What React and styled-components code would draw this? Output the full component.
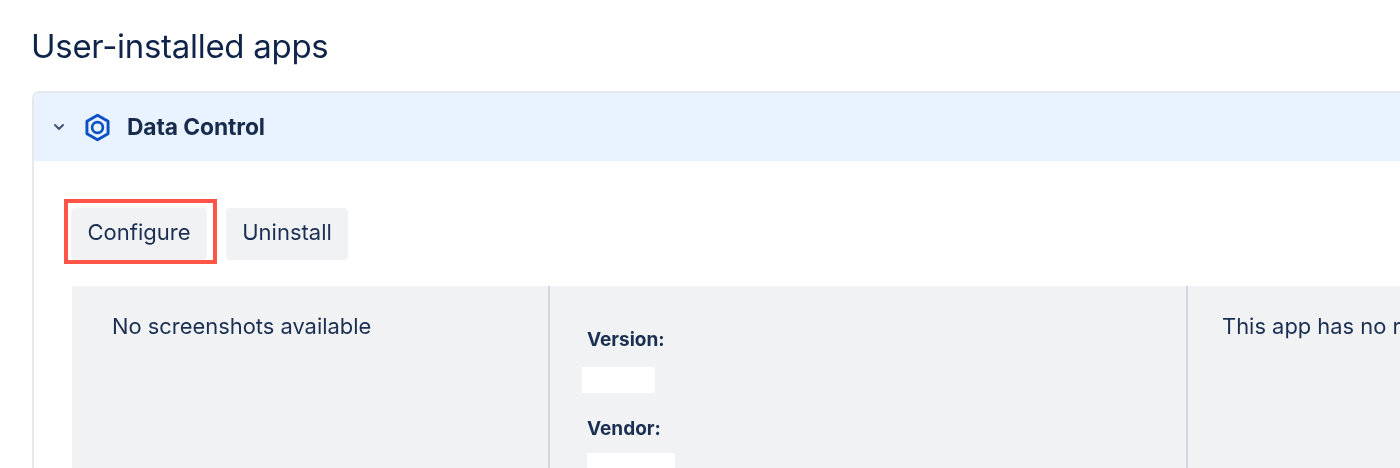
import styled, { createGlobalStyle } from "styled-components"

const GlobalStyle = createGlobalStyle`
    html, body {
        margin: 0;
        padding: 0;
        height: 468px;
        overflow: hidden;
        background-color: #fff;
    }
`

const Page = styled.div`
    width: 1500px;
    height: 468px;
    padding: 24px 0 0 32px;
    box-sizing: border-box;
    overflow: hidden;
    font-family: Inter, "Liberation Sans", sans-serif;
    color: #172b4d;
    filter: blur(0.45px);
`

const Title = styled.h1`
    margin: 0 0 22px -1px;
    height: 45px;
    font-size: 33px;
    line-height: 45px;
    font-weight: 400;
    letter-spacing: -0.29px;
    color: #10244a;
`

const Panel = styled.section`
    height: 400px;
    border: 2px solid #e6e8ee;
    border-bottom: 0;
    border-radius: 7px 7px 0 0;
`

const PanelHeader = styled.header`
    display: flex;
    align-items: center;
    height: 68px;
    padding-left: 19px;
    background-color: #e9f2ff;
    border-radius: 5px 5px 0 0;
`

const AppName = styled.span`
    margin-left: 16px;
    padding-bottom: 2px;
    font-size: 22.8px;
    font-weight: 700;
    letter-spacing: -0.1px;
`

const AppIcon = styled.svg`
    margin-left: 19px;
    flex: none;
`

const Actions = styled.div`
    display: flex;
    gap: 19px;
    padding: 47px 0 26px 37px;
`

const Highlighted = styled.div`
    position: relative;
    display: flex;
`

const HighlightBox = styled.span`
    position: absolute;
    left: -7px;
    top: -9px;
    width: 153px;
    height: 65px;
    box-sizing: border-box;
    border: 4px solid #ff5548;
    pointer-events: none;
`

const Button = styled.button`
    height: 52px;
    width: ${(props) => props.$width}px;
    padding: 0 0 5px;
    border: 0;
    border-radius: 4px;
    background-color: #f1f2f4;
    color: #1b2f52;
    font-family: inherit;
    font-size: 22px;
`

const Details = styled.div`
    display: grid;
    grid-template-columns: 476px 638px 1fr;
    height: 182px;
    margin-left: 38px;
    background-color: #f1f2f4;
`

const Column = styled.div`
    box-sizing: border-box;
    padding: ${(props) => props.$padding};
    border-left: ${(props) => (props.$divider ? "2px solid #d3d6e1" : "0")};
    font-size: 21.9px;
    line-height: 30px;
    color: #1b2f52;
    white-space: nowrap;
`

const Meta = styled.div`
    display: flex;
    flex-direction: column;
    align-items: flex-start;
`

const MetaLabel = styled.span`
    height: 28px;
    font-size: 19px;
    line-height: 28px;
    font-weight: 700;
    color: #1b2f52;
`

const Redacted = styled.span`
    width: ${(props) => props.$width}px;
    height: 26px;
    margin: ${(props) => props.$top}px 0 22px ${(props) => props.$offset}px;
    background-color: #fff;
`

function Hexagon()
{
    return(
        <AppIcon width="27" height="29" viewBox="0 0 26 28" fill="none" stroke="#0c51c4">
            <path d="M13 2.2 L23.2 8 V20 L13 25.8 L2.8 20 V8 Z" strokeWidth="2.8" strokeLinejoin="round"/>
            <circle cx="13" cy="14" r="5.2" strokeWidth="2.6"/>
        </AppIcon>
    )
}

function Chevron()
{
    return(
        <svg width="12" height="8" viewBox="0 0 12 8" fill="none" stroke="#44546f" strokeWidth="2" strokeLinecap="round" strokeLinejoin="round">
            <path d="M2 2 L6 6 L10 2"/>
        </svg>
    )
}

function App()
{
    return(
        <Page>
            <GlobalStyle/>
            <Title>User-installed apps</Title>
            <Panel>
                <PanelHeader>
                    <Chevron/>
                    <Hexagon/>
                    <AppName>Data Control</AppName>
                </PanelHeader>
                <Actions>
                    <Highlighted>
                        <Button $width={136}>Configure</Button>
                        <HighlightBox/>
                    </Highlighted>
                    <Button $width={122}>Uninstall</Button>
                </Actions>
                <Details>
                    <Column $padding="25px 0 0 40px">No screenshots available</Column>
                    <Column $divider $padding="40px 0 0 37px">
                        <Meta>
                            <MetaLabel>Version:</MetaLabel>
                            <Redacted $width={73} $offset={-5} $top={13}/>
                            <MetaLabel>Vendor:</MetaLabel>
                            <Redacted $width={88} $offset={0} $top={10}/>
                        </Meta>
                    </Column>
                    <Column $divider $padding="25px 0 0 34px">This app has no reviews yet</Column>
                </Details>
            </Panel>
        </Page>
    )
}

export default App
